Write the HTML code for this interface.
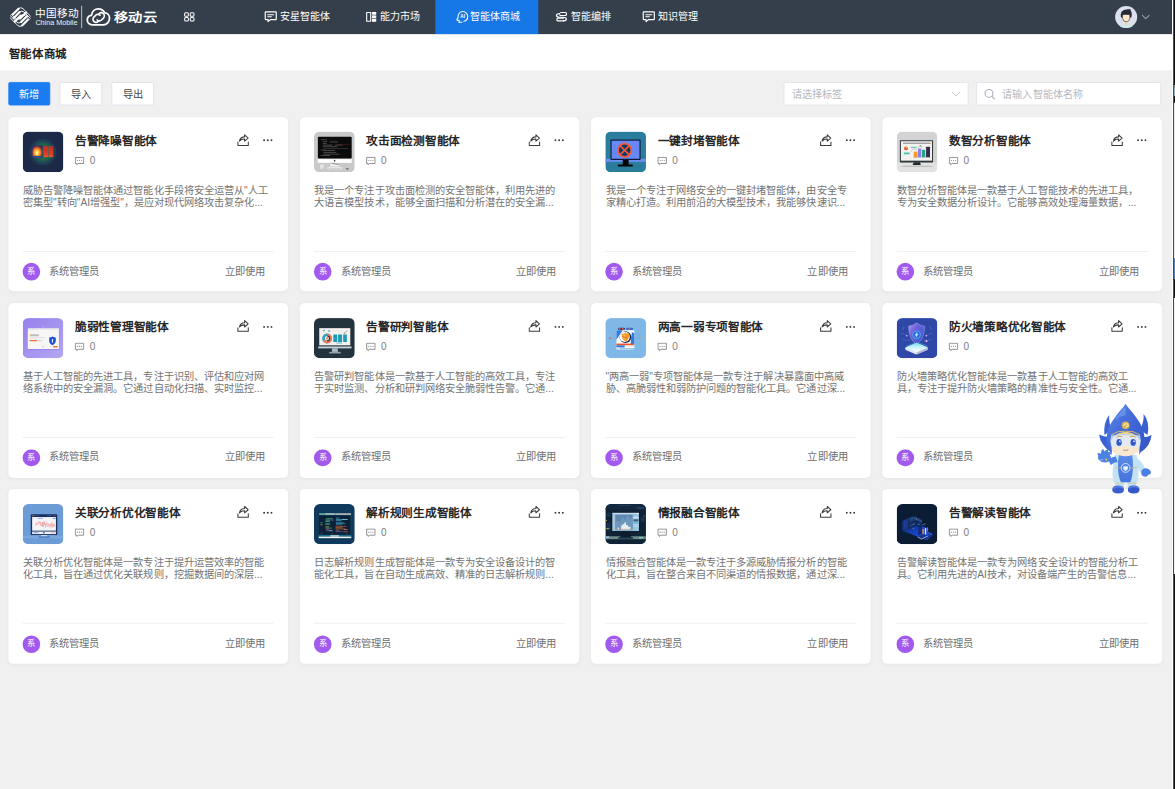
<!DOCTYPE html>
<html lang="zh-CN">
<head>
<meta charset="utf-8">
<title>智能体商城</title>
<style>
*{box-sizing:border-box;margin:0;padding:0}
html,body{width:1175px;height:789px;overflow:hidden;background:#f0f0f0;font-family:"Liberation Sans",sans-serif}
#edge{position:absolute;left:1172px;top:0;width:3px;height:789px;background:#fff}
#edge i{position:absolute;top:0;height:789px;width:1px}
#edge .r{left:1px;background:#d0101c}
#edge .k{left:2px;background:linear-gradient(to bottom,#101010 0,#101010 85px,#8a8f92 85px,#8a8f92 88px,#8fb7bd 88px,#8fb7bd 96px,#151515 96px,#151515 103px,#ececec 103px,#ececec 258px,#4a86c8 258px,#4a86c8 279px,#161616 279px,#161616 298px,#f2f2f2 298px,#f2f2f2 574px,#141414 574px,#141414 789px)}
#page{position:absolute;left:0;top:0;width:1400px;height:943px;transform:scale(0.83714);transform-origin:0 0;background:#f0f0f0;overflow:hidden;color:#333;font-size:12px}
#hdr{position:absolute;left:0;top:0;width:1400px;height:40.7px;background:#343f4b;color:#fff}
#hdr .abs{position:absolute}
.nav{position:absolute;top:0;height:40.7px;line-height:40.7px;font-size:12px;color:#fff;white-space:nowrap}
.nav svg{position:absolute;top:13px;left:0}
#tabact{position:absolute;left:519.6px;top:0;width:123.2px;height:40.7px;background:#1677e6}
#tbar{position:absolute;left:0;top:40.7px;width:1400px;height:43.1px;background:#fff}
#tbar b{position:absolute;left:10.2px;top:14.5px;font-size:13.7px;line-height:19px;color:#1f1f1f;font-weight:bold}
.btn{position:absolute;top:98px;height:28px;width:50.6px;border:1px solid #dcdfe6;background:#fff;border-radius:2px;font-size:12.2px;line-height:28.2px;text-align:center;color:#444}
.btn.pri{background:#1a7cf0;border-color:#1a7cf0;color:#fff}
.inp{position:absolute;top:98px;height:28px;border:1px solid #dfe2e8;background:#fff;border-radius:2px;font-size:12.1px;line-height:28.6px;color:#b4b8bf;white-space:nowrap}
#grid{position:absolute;left:9.8px;top:139.9px;display:grid;grid-template-columns:repeat(4,334.4px);grid-auto-rows:208.6px;column-gap:13.6px;row-gap:13.65px}
.card{position:relative;background:#fff;border-radius:6px;box-shadow:0 1px 5px rgba(0,0,0,.045)}
.ic{position:absolute;left:17.6px;top:17.4px;width:48.6px;height:48.6px;border-radius:7px;overflow:hidden}
.ic svg{display:block;width:100%;height:100%}
.tt{position:absolute;left:79.8px;top:18.8px;font-size:14px;line-height:19px;font-weight:bold;color:#262626;white-space:nowrap}
.sh{position:absolute;left:272.9px;top:19.9px;width:15px;height:15px}
.dt{position:absolute;left:303.8px;top:26.4px;width:12px;height:3px}
.cm{position:absolute;left:79.4px;top:47px;width:12px;height:11px}
.cn{position:absolute;left:97.3px;top:45px;font-size:12px;line-height:14px;color:#7d7d7d}
.ds{position:absolute;left:17.6px;top:80.9px;width:300px;font-size:12.2px;line-height:14px;color:#737373;white-space:nowrap;overflow:hidden}
.hr{position:absolute;left:17.6px;right:17.6px;top:159.8px;height:1px;background:#ededed}
.av{position:absolute;left:17.6px;top:174.5px;width:20.8px;height:20.8px;border-radius:50%;background:#a259ee;color:#fff;font-size:10px;line-height:20.8px;text-align:center}
.nm{position:absolute;left:49px;top:177.3px;font-size:12.3px;line-height:14px;color:#6e6e6e;white-space:nowrap}
.us{position:absolute;right:27.6px;top:177.3px;font-size:12.3px;line-height:14px;color:#6e6e6e;white-space:nowrap}
#mascot{position:absolute;left:1085px;top:395px;width:70px;height:105px}
</style>
</head>
<body>
<div id="page">
  <div id="hdr">
    <div id="tabact"></div>
    <svg class="abs" style="left:0;top:0" width="1400" height="40.3" viewBox="0 0 1400 40.3" fill="none" stroke="#fff" stroke-linecap="round" stroke-linejoin="round">
<!-- china mobile diamond -->
<g transform="translate(24.300 20.400) rotate(45) scale(1.120)">
<clipPath id="cmc"><rect x="-9.400" y="-9.400" width="18.800" height="18.800" rx="5"/></clipPath>
<g clip-path="url(#cmc)">
<path d="M-7.700 3.600V-5M-4.300 5.600V-3.200M-.900 7.800V-1.400M7.700 -3.600V5M4.300 -5.600V3.200M.900 -7.800V1.400" stroke-width="2.250"/>
<path d="M-7.700 -5Q-7.700 -8.300 -4.400 -8.300H9.500M-4.300 -3.200Q-4.300 -6.500 -1 -6.500H9.500M-.900 -1.400Q-.900 -4.700 2.400 -4.700H9.500M7.700 5Q7.700 8.300 4.400 8.300H-9.500M4.300 3.200Q4.300 6.500 1 6.500H-9.500M.900 1.400Q.900 4.700 -2.400 4.700H-9.500" stroke-width=".950"/>
</g>
</g>
<line x1="97.5" y1="7.4" x2="97.5" y2="33.2" stroke="#c9cdd2" stroke-width="1.1"/>
<!-- cloud -->
<g stroke-width="2.1">
<path d="M110.2 29.6c-3.6 0-6-2.4-6-5.6 0-3 2.2-5.3 5-5.6.5-4.6 4-7.8 8.3-7.8 3.4 0 6.2 1.9 7.5 4.8 3.4.2 5.800 2.900 5.800 6.400 0 4.200-3.200 7.800-7.400 7.800z"/>
<path d="M119.6 18.2c-1.400-1.500-3.800-1.500-5.200-.1l-2.300 2.300c-1.500 1.500-1.500 3.800 0 5.200 1.400 1.400 3.700 1.400 5.200 0l1.100-1.100" stroke-width="1.9"/>
<path d="M116 23.800c1.400 1.500 3.800 1.500 5.200.1l2.300-2.300c1.500-1.500 1.500-3.800 0-5.200-1.400-1.400-3.700-1.400-5.200 0l-1.100 1.100" stroke-width="1.900"/>
</g>
<!-- grid icon -->
<g stroke-width="1.25">
<rect x="220.500" y="15.200" width="4.500" height="4.200" rx="1.300"/><rect x="227.200" y="15.200" width="4.500" height="4.200" rx="1.300"/>
<rect x="220.500" y="21" width="4.500" height="4.200" rx="1.300"/><rect x="227.200" y="21" width="4.500" height="4.200" rx="1.300"/>
</g>
<!-- nav1 icon -->
<g stroke-width="1.400">
<path d="M317.600 14.200h11.600c.5 0 .8.300.8.800v7.600c0 .5-.3.800-.8.800h-6.300l-2.700 2.400v-2.400h-2.600c-.5 0-.8-.3-.8-.8V15c0-.5.300-.8.800-.8z"/>
<path d="M319.800 17.500h7.200M319.800 20.100h4.400" stroke-width="1.200"/>
</g>
<g stroke-width="1.400" transform="translate(451.600 0)">
<path d="M317.600 14.200h11.600c.5 0 .8.300.8.800v7.600c0 .5-.3.800-.8.800h-6.300l-2.700 2.400v-2.400h-2.600c-.5 0-.8-.3-.8-.8V15c0-.5.300-.8.800-.8z"/>
<path d="M319.800 17.500h7.200M319.800 20.100h4.400" stroke-width="1.200"/>
</g>
<!-- nav2 icon -->
<g stroke-width="1.300"><rect x="438" y="15" width="4.800" height="10.300"/></g>
<g fill="#fff" stroke="none"><rect x="444.400" y="14.300" width="5" height="3.300"/><rect x="444.400" y="18.400" width="5" height="3.500"/><rect x="444.400" y="22.700" width="5" height="3.300"/></g>
<!-- nav3 icon: head with AI -->
<g stroke-width="1.300">
<path d="M548.400 26.600v-2.300l-2.200-.2c-.4 0-.6-.3-.4-.7l1.300-2.600c-.3-4 2.300-7 5.800-7 3.300 0 5.800 2.700 5.800 5.800 0 2.900-2 5.200-4.700 5.700"/>
<path d="M548.400 26.600h3.400"/>
</g>
<text x="549.800" y="21.800" font-family="Liberation Sans, sans-serif" font-size="5.600" font-weight="bold" fill="#fff" stroke="none">AI</text>
<!-- nav4 icon -->
<g stroke-width="1.400">
<path d="M669.800 14.900h5.600c.7 0 1.200.5 1.200 1.200v1.200c0 .7-.5 1.200-1.200 1.200h-5.600c-.7 0-1.200-.5-1.200-1.200"/>
<path d="M668.600 16.100c-2.200 0-3.900 1-3.900 2.500s1.500 2 3.500 2h4.600c2.100 0 3.700.6 3.700 2.100 0 1.400-1.400 2.300-3.200 2.300"/>
<path d="M673.300 25h-6.800c-.7 0-1.200-.5-1.200-1.200v-.9c0-.7.500-1.200 1.200-1.200h6.800"/>
</g>
<!-- avatar -->
<g stroke="none">
<circle cx="1345.300" cy="20.300" r="13.200" fill="#dcdfec"/>
<clipPath id="avc"><circle cx="1345.300" cy="20.300" r="13.200"/></clipPath>
<g clip-path="url(#avc)">
<ellipse cx="1345.300" cy="33.200" rx="8.200" ry="4.600" fill="#c8ecf2"/>
<path d="M1343.600 24.600h3.400v6l-1.700 1.300-1.700-1.300z" fill="#f6d8a8"/>
<path d="M1339.200 21c-1.200-5.800 1-9.400 6.400-9.700 2.300-.1 4.200-.4 4.800-.8-.2 1.100-.1 1.400.1 1.800 1.600 1.700 2 5 1 8.700z" fill="#262b38"/>
<path d="M1341 17.400c2.800-.3 6-.3 8.600 0 .5 3.900-.2 6.300-1.600 7.600-1.300 1.300-4.100 1.300-5.400 0-1.400-1.300-2.100-3.700-1.600-7.600z" fill="#ffe6c8" stroke="#1d1d24" stroke-width=".700"/>
</g>
</g>
<path d="M1364.700 18.300l4 4 4-4" stroke="#98a1ab" stroke-width="1.200"/>
</svg>
<div class="abs" style="left:41.800px;top:8.800px;font-size:12.700px;line-height:15px;white-space:nowrap;color:#fff">中国移动</div>
<div class="abs" style="left:42.300px;top:21.800px;font-size:8.600px;line-height:10px;white-space:nowrap;color:#f2f2f2">China Mobile</div>
<div class="abs" style="left:135.900px;top:10.900px;font-size:14.600px;line-height:21px;font-weight:bold;transform:scaleX(1.165);transform-origin:0 0;white-space:nowrap;color:#fff">移动云</div>
<div class="nav" style="left:334.200px">安星智能体</div>
<div class="nav" style="left:454px">能力市场</div>
<div class="nav" style="left:561.600px">智能体商城</div>
<div class="nav" style="left:681.500px">智能编排</div>
<div class="nav" style="left:785.800px">知识管理</div>

  </div>
  <div id="tbar"><b>智能体商城</b></div>
  <div class="btn pri" style="left:9.8px">新增</div>
  <div class="btn" style="left:71px">导入</div>
  <div class="btn" style="left:133.2px">导出</div>
  <div class="inp" style="left:935.9px;width:221.2px;padding-left:9px">请选择标签</div>
  <div class="inp" style="left:1166.4px;width:221px;padding-left:30px">请输入智能体名称</div>
  <svg style="position:absolute;left:0;top:84px" width="1400" height="56" viewBox="0 84 1400 56" fill="none" stroke-linecap="round" stroke-linejoin="round">
<path d="M1137.800 110.400l4.300 4.200 4.300-4.200" stroke="#b9bdc4" stroke-width="1.100"/>
<circle cx="1181.400" cy="111.600" r="4.700" stroke="#a6abb3" stroke-width="1.200"/><path d="M1184.900 115.200l3 3.100" stroke="#a6abb3" stroke-width="1.200"/>
</svg>
  <div id="grid">
    <div class="card"><div class="ic"><svg viewBox="0 0 640 640" preserveAspectRatio="none"><defs><radialGradient id="g1a"><stop offset="0" stop-color="#2a7a50"/><stop offset=".55" stop-color="#22664e" stop-opacity=".95"/><stop offset=".8" stop-color="#1e4c5a" stop-opacity=".6"/><stop offset="1" stop-color="#1c2848" stop-opacity="0"/></radialGradient>
<radialGradient id="g1b" cx=".45" cy=".6" r=".62"><stop offset="0" stop-color="#fff3a0"/><stop offset=".28" stop-color="#ffc93a"/><stop offset=".52" stop-color="#f28a2a"/><stop offset=".75" stop-color="#d8402c" stop-opacity=".9"/><stop offset="1" stop-color="#8a2a4a" stop-opacity=".25"/></radialGradient>
<linearGradient id="g1c" x1="0" y1="0" x2="0" y2="1"><stop offset="0" stop-color="#c42f28"/><stop offset=".6" stop-color="#d93c2c"/><stop offset="1" stop-color="#e85c2e"/></linearGradient></defs><rect width="640" height="640" fill="#1c2848"/>
<circle cx="320" cy="325" r="235" fill="url(#g1a)"/>
<g fill="none" stroke="#3a9aa0" stroke-width="8" stroke-dasharray="7 24" opacity=".8"><circle cx="320" cy="325" r="205"/><circle cx="320" cy="325" r="245" stroke="#8a7a3a" stroke-dasharray="5 38"/></g>
<rect x="155" y="222" width="158" height="186" fill="#1b2f6a"/>
<rect x="155" y="222" width="158" height="186" fill="url(#g1b)"/>
<rect x="155" y="385" width="158" height="23" fill="#1f4f9a"/>
<rect x="218" y="315" width="22" height="52" fill="#fff6c8"/>
<rect x="330" y="232" width="72" height="172" fill="url(#g1c)"/><rect x="410" y="232" width="72" height="172" fill="url(#g1c)"/>
<g stroke="#b9281f" stroke-width="7" opacity=".55"><path d="M338 268h56M338 300h56M338 332h56M338 364h56M418 268h56M418 300h56M418 332h56M418 364h56"/></g></svg></div><div class="tt">告警降噪智能体</div><svg class="sh" viewBox="0 0 15 15" fill="none" stroke="#3a3a3a" stroke-width="1.25" stroke-linejoin="round" stroke-linecap="round"><path d="M1.2 9.6v4.2h12.4V9.6"/><path d="M3 8.6c.6-3.2 2.6-5 6.2-5.1V1l4.2 3.9-4.2 3.7V6.1C6.6 6 4.6 6.7 3 8.6z"/></svg><svg class="dt" viewBox="0 0 12 3"><circle cx="1.5" cy="1.5" r="1.15" fill="#3a3a3a"/><circle cx="5.9" cy="1.5" r="1.15" fill="#3a3a3a"/><circle cx="10.3" cy="1.5" r="1.15" fill="#3a3a3a"/></svg><svg class="cm" viewBox="0 0 12 11" fill="none" stroke="#868686" stroke-width="1.1" stroke-linejoin="round"><path d="M1 1h10v7.3H4.4L2.7 9.8V8.3H1z"/><g fill="#868686" stroke="none"><circle cx="3.5" cy="4.7" r=".7"/><circle cx="6" cy="4.7" r=".7"/><circle cx="8.5" cy="4.7" r=".7"/></g></svg><span class="cn">0</span><div class="ds">威胁告警降噪智能体通过智能化手段将安全运营从"人工<br>密集型"转向"AI增强型"，是应对现代网络攻击复杂化...</div><div class="hr"></div><div class="av">系</div><div class="nm">系统管理员</div><div class="us">立即使用</div></div>
    <div class="card"><div class="ic"><svg viewBox="0 0 640 640" preserveAspectRatio="none"><rect width="640" height="640" fill="#c9c9c9"/>
<rect x="62" y="82" width="532" height="342" rx="14" fill="#0b0b0b"/>
<g stroke="#8d8d8d" stroke-width="9" opacity=".8"><path d="M110 130h95M140 160h70M250 165h130M140 190h60M140 215h150M330 215h120M140 240h230"/><path d="M150 268h390" stroke="#5d5d5d"/><path d="M105 292h70M150 300h180M150 330h200M150 358h250M105 378h150"/></g>
<path d="M370 208h190" stroke="#a33" stroke-width="7" opacity=".7"/>
<rect x="60" y="436" width="534" height="58" fill="#fff"/>
<rect x="318" y="446" width="16" height="30" rx="6" fill="#333"/>
<path d="M270 498l120 18 10 34H250z" fill="#f0f0f0"/><path d="M275 500l115 22" stroke="#444" stroke-width="8"/>
<rect x="215" y="560" width="225" height="34" rx="6" fill="#ededed"/><rect x="230" y="572" width="195" height="12" fill="#bdbdbd"/>
<path d="M100 520h55v40l-20 28h-35z" fill="#e6e6e6"/><path d="M495 575l60 8-30 22z" fill="#666"/></svg></div><div class="tt">攻击面检测智能体</div><svg class="sh" viewBox="0 0 15 15" fill="none" stroke="#3a3a3a" stroke-width="1.25" stroke-linejoin="round" stroke-linecap="round"><path d="M1.2 9.6v4.2h12.4V9.6"/><path d="M3 8.6c.6-3.2 2.6-5 6.2-5.1V1l4.2 3.9-4.2 3.7V6.1C6.6 6 4.6 6.7 3 8.6z"/></svg><svg class="dt" viewBox="0 0 12 3"><circle cx="1.5" cy="1.5" r="1.15" fill="#3a3a3a"/><circle cx="5.9" cy="1.5" r="1.15" fill="#3a3a3a"/><circle cx="10.3" cy="1.5" r="1.15" fill="#3a3a3a"/></svg><svg class="cm" viewBox="0 0 12 11" fill="none" stroke="#868686" stroke-width="1.1" stroke-linejoin="round"><path d="M1 1h10v7.3H4.4L2.7 9.8V8.3H1z"/><g fill="#868686" stroke="none"><circle cx="3.5" cy="4.7" r=".7"/><circle cx="6" cy="4.7" r=".7"/><circle cx="8.5" cy="4.7" r=".7"/></g></svg><span class="cn">0</span><div class="ds">我是一个专注于攻击面检测的安全智能体，利用先进的<br>大语言模型技术，能够全面扫描和分析潜在的安全漏...</div><div class="hr"></div><div class="av">系</div><div class="nm">系统管理员</div><div class="us">立即使用</div></div>
    <div class="card"><div class="ic"><svg viewBox="0 0 640 640" preserveAspectRatio="none"><rect width="640" height="640" fill="#2a7d9c"/>
<rect y="430" width="640" height="48" fill="#6e8df3"/>
<rect x="82" y="128" width="474" height="320" rx="10" fill="#0f1c3e"/>
<rect x="100" y="146" width="438" height="284" fill="#6889f5"/>
<path d="M150 230l-12 60 12 60M490 230l12 60-12 60" stroke="#557be0" stroke-width="7" fill="none"/>
<circle cx="305" cy="295" r="104" fill="#0c3a62" stroke="#f5573a" stroke-width="28"/>
<path d="M232 222l146 146M378 222L232 368" stroke="#f5573a" stroke-width="26"/>
<rect x="275" y="446" width="92" height="80" fill="#030303"/>
<rect x="198" y="522" width="236" height="30" rx="6" fill="#050505"/>
<path d="M60 548h120M450 548h130" stroke="#256f8c" stroke-width="6"/></svg></div><div class="tt">一键封堵智能体</div><svg class="sh" viewBox="0 0 15 15" fill="none" stroke="#3a3a3a" stroke-width="1.25" stroke-linejoin="round" stroke-linecap="round"><path d="M1.2 9.6v4.2h12.4V9.6"/><path d="M3 8.6c.6-3.2 2.6-5 6.2-5.1V1l4.2 3.9-4.2 3.7V6.1C6.6 6 4.6 6.7 3 8.6z"/></svg><svg class="dt" viewBox="0 0 12 3"><circle cx="1.5" cy="1.5" r="1.15" fill="#3a3a3a"/><circle cx="5.9" cy="1.5" r="1.15" fill="#3a3a3a"/><circle cx="10.3" cy="1.5" r="1.15" fill="#3a3a3a"/></svg><svg class="cm" viewBox="0 0 12 11" fill="none" stroke="#868686" stroke-width="1.1" stroke-linejoin="round"><path d="M1 1h10v7.3H4.4L2.7 9.8V8.3H1z"/><g fill="#868686" stroke="none"><circle cx="3.5" cy="4.7" r=".7"/><circle cx="6" cy="4.7" r=".7"/><circle cx="8.5" cy="4.7" r=".7"/></g></svg><span class="cn">0</span><div class="ds">我是一个专注于网络安全的一键封堵智能体，由安全专<br>家精心打造。利用前沿的大模型技术，我能够快速识...</div><div class="hr"></div><div class="av">系</div><div class="nm">系统管理员</div><div class="us">立即使用</div></div>
    <div class="card"><div class="ic"><svg viewBox="0 0 640 640" preserveAspectRatio="none"><rect width="640" height="640" fill="#d3d3d5"/>
<rect y="488" width="640" height="152" fill="#e2e2e3"/>
<ellipse cx="318" cy="548" rx="262" ry="9" fill="#9c9c9c" opacity=".7"/>
<path d="M268 484h100l14 46H254z" fill="#1d2a2b"/>
<rect x="52" y="138" width="522" height="350" rx="10" fill="#2c3739"/>
<rect x="68" y="154" width="490" height="306" fill="#f3f2ef"/>
<rect x="100" y="180" width="430" height="10" rx="5" fill="#5a5560"/><circle cx="538" cy="185" r="9" fill="#f0a83a"/>
<circle cx="148" cy="268" r="30" fill="#e8553b"/><path d="M148 268v-30a30 30 0 0 1 28 20z" fill="#f3b24a"/>
<rect x="226" y="242" width="88" height="15" fill="#3fbfae"/>
<rect x="114" y="332" width="92" height="28" fill="#43c4b4"/>
<path d="M228 318l40-48 36 18 60-62 40 22" stroke="#8a8a8a" stroke-width="6" fill="none"/><circle cx="372" cy="226" r="9" fill="#3a3a3a"/><circle cx="392" cy="246" r="8" fill="#f0a83a"/>
<rect x="270" y="318" width="60" height="90" fill="#f5982b"/>
<rect x="337" y="268" width="52" height="140" rx="8" fill="#8d7ee9"/>
<rect x="400" y="288" width="52" height="120" rx="6" fill="#1fa68d"/>
<rect x="464" y="240" width="62" height="168" rx="10" fill="#3a2a4e"/>
<path d="M262 410h280" stroke="#8d8d8d" stroke-width="5"/></svg></div><div class="tt">数智分析智能体</div><svg class="sh" viewBox="0 0 15 15" fill="none" stroke="#3a3a3a" stroke-width="1.25" stroke-linejoin="round" stroke-linecap="round"><path d="M1.2 9.6v4.2h12.4V9.6"/><path d="M3 8.6c.6-3.2 2.6-5 6.2-5.1V1l4.2 3.9-4.2 3.7V6.1C6.6 6 4.6 6.7 3 8.6z"/></svg><svg class="dt" viewBox="0 0 12 3"><circle cx="1.5" cy="1.5" r="1.15" fill="#3a3a3a"/><circle cx="5.9" cy="1.5" r="1.15" fill="#3a3a3a"/><circle cx="10.3" cy="1.5" r="1.15" fill="#3a3a3a"/></svg><svg class="cm" viewBox="0 0 12 11" fill="none" stroke="#868686" stroke-width="1.1" stroke-linejoin="round"><path d="M1 1h10v7.3H4.4L2.7 9.8V8.3H1z"/><g fill="#868686" stroke="none"><circle cx="3.5" cy="4.7" r=".7"/><circle cx="6" cy="4.7" r=".7"/><circle cx="8.5" cy="4.7" r=".7"/></g></svg><span class="cn">0</span><div class="ds">数智分析智能体是一款基于人工智能技术的先进工具，<br>专为安全数据分析设计。它能够高效处理海量数据，...</div><div class="hr"></div><div class="av">系</div><div class="nm">系统管理员</div><div class="us">立即使用</div></div>
    <div class="card"><div class="ic"><svg viewBox="0 0 640 640" preserveAspectRatio="none"><defs><linearGradient id="g5a" x1="0" y1="0" x2="1" y2="1"><stop offset="0" stop-color="#9680ec"/><stop offset="1" stop-color="#b4a6f3"/></linearGradient></defs><rect width="640" height="640" fill="url(#g5a)"/>
<rect x="90" y="178" width="490" height="322" rx="8" fill="#7f68d8" opacity=".35"/>
<rect x="82" y="162" width="490" height="322" rx="8" fill="#f7f6f4"/>
<rect x="82" y="162" width="490" height="26" rx="8" fill="#ecebea"/>
<circle cx="106" cy="176" r="6" fill="#f0c24a"/><circle cx="150" cy="176" r="6" fill="#5b8def"/>
<rect x="118" y="255" width="138" height="30" fill="#8a8a8a" opacity=".55"/><rect x="118" y="255" width="10" height="30" fill="#f2c14e"/>
<rect x="112" y="306" width="240" height="8" fill="#c8c8c8"/>
<rect x="110" y="346" width="118" height="18" rx="4" fill="#f2703a"/><rect x="228" y="346" width="80" height="18" rx="4" fill="#dcdcdc"/>
<path d="M470 290c-20 14-40 16-52 16v52c0 36 26 56 52 70 26-14 52-34 52-70v-52c-12 0-32-2-52-16z" fill="#1d4fd7"/>
<circle cx="470" cy="340" r="13" fill="#fff"/><path d="M464 344h12l4 40h-20z" fill="#fff"/>
<rect x="476" y="440" width="78" height="24" rx="12" fill="#f2703a"/>
<rect x="310" y="446" width="22" height="10" fill="#9a9a9a"/><rect x="430" y="446" width="14" height="10" fill="#c5c5c5"/>
<rect x="322" y="128" width="8" height="34" fill="#cfc6f7"/></svg></div><div class="tt">脆弱性管理智能体</div><svg class="sh" viewBox="0 0 15 15" fill="none" stroke="#3a3a3a" stroke-width="1.25" stroke-linejoin="round" stroke-linecap="round"><path d="M1.2 9.6v4.2h12.4V9.6"/><path d="M3 8.6c.6-3.2 2.6-5 6.2-5.1V1l4.2 3.9-4.2 3.7V6.1C6.6 6 4.6 6.7 3 8.6z"/></svg><svg class="dt" viewBox="0 0 12 3"><circle cx="1.5" cy="1.5" r="1.15" fill="#3a3a3a"/><circle cx="5.9" cy="1.5" r="1.15" fill="#3a3a3a"/><circle cx="10.3" cy="1.5" r="1.15" fill="#3a3a3a"/></svg><svg class="cm" viewBox="0 0 12 11" fill="none" stroke="#868686" stroke-width="1.1" stroke-linejoin="round"><path d="M1 1h10v7.3H4.4L2.7 9.8V8.3H1z"/><g fill="#868686" stroke="none"><circle cx="3.5" cy="4.7" r=".7"/><circle cx="6" cy="4.7" r=".7"/><circle cx="8.5" cy="4.7" r=".7"/></g></svg><span class="cn">0</span><div class="ds">基于人工智能的先进工具，专注于识别、评估和应对网<br>络系统中的安全漏洞。它通过自动化扫描、实时监控...</div><div class="hr"></div><div class="av">系</div><div class="nm">系统管理员</div><div class="us">立即使用</div></div>
    <div class="card"><div class="ic"><svg viewBox="0 0 640 640" preserveAspectRatio="none"><rect width="640" height="640" fill="#22333d"/>
<rect x="84" y="158" width="488" height="270" fill="#f4f1ef"/>
<circle cx="208" cy="320" r="58" fill="none" stroke="#2ea6c0" stroke-width="42"/>
<path d="M208 262a58 58 0 1 1-50 88" fill="none" stroke="#f07a62" stroke-width="42"/>
<path d="M208 282a38 38 0 0 1 0 76" fill="none" stroke="#2a2e36" stroke-width="18"/>
<circle cx="208" cy="320" r="18" fill="#f07a62"/>
<rect x="305" y="258" width="62" height="118" fill="#1b9bb6"/><rect x="380" y="258" width="62" height="118" fill="#1b9bb6"/><rect x="460" y="258" width="58" height="118" fill="#1b9bb6"/>
<path d="M305 318h213" stroke="#48b7cc" stroke-width="6"/>
<rect x="355" y="386" width="90" height="12" fill="#36aac4"/>
<circle cx="150" cy="200" r="12" fill="#f07a62"/><circle cx="165" cy="190" r="10" fill="#2ea6c0"/><path d="M215 212l22-30 24 30z" fill="#2ea6c0"/><rect x="285" y="198" width="160" height="6" fill="#f5cfc5"/>
<circle cx="478" cy="236" r="9" fill="#f07a62"/><circle cx="500" cy="250" r="8" fill="#f0a24a"/><path d="M470 250l58-62" stroke="#2c6e8a" stroke-width="7"/>
<rect x="68" y="446" width="524" height="30" fill="#c8d3da"/>
<rect x="284" y="476" width="92" height="56" fill="#aeb9c0"/><rect x="240" y="530" width="182" height="26" fill="#97a3ab"/></svg></div><div class="tt">告警研判智能体</div><svg class="sh" viewBox="0 0 15 15" fill="none" stroke="#3a3a3a" stroke-width="1.25" stroke-linejoin="round" stroke-linecap="round"><path d="M1.2 9.6v4.2h12.4V9.6"/><path d="M3 8.6c.6-3.2 2.6-5 6.2-5.1V1l4.2 3.9-4.2 3.7V6.1C6.6 6 4.6 6.7 3 8.6z"/></svg><svg class="dt" viewBox="0 0 12 3"><circle cx="1.5" cy="1.5" r="1.15" fill="#3a3a3a"/><circle cx="5.9" cy="1.5" r="1.15" fill="#3a3a3a"/><circle cx="10.3" cy="1.5" r="1.15" fill="#3a3a3a"/></svg><svg class="cm" viewBox="0 0 12 11" fill="none" stroke="#868686" stroke-width="1.1" stroke-linejoin="round"><path d="M1 1h10v7.3H4.4L2.7 9.8V8.3H1z"/><g fill="#868686" stroke="none"><circle cx="3.5" cy="4.7" r=".7"/><circle cx="6" cy="4.7" r=".7"/><circle cx="8.5" cy="4.7" r=".7"/></g></svg><span class="cn">0</span><div class="ds">告警研判智能体是一款基于人工智能的高效工具，专注<br>于实时监测、分析和研判网络安全脆弱性告警。它通...</div><div class="hr"></div><div class="av">系</div><div class="nm">系统管理员</div><div class="us">立即使用</div></div>
    <div class="card"><div class="ic"><svg viewBox="0 0 640 640" preserveAspectRatio="none"><rect width="640" height="640" fill="#7fb7e6"/>
<g stroke="#6aa0d2" stroke-width="5" fill="none"><path d="M70 318h110M100 270h70M460 318h110M470 250h60v68"/></g>
<rect x="60" y="305" width="26" height="26" fill="#f0603a"/><rect x="555" y="308" width="20" height="20" fill="#e89a3a"/><rect x="95" y="262" width="18" height="18" fill="#f2a58a"/>
<rect x="205" y="150" width="100" height="38" rx="10" fill="#1f3a78"/><rect x="212" y="156" width="26" height="26" fill="#f0603a"/><rect x="262" y="156" width="26" height="26" fill="#f0603a"/>
<rect x="330" y="150" width="105" height="38" rx="10" fill="#2b6fd6"/><rect x="366" y="152" width="26" height="30" fill="#f0603a"/>
<rect x="176" y="192" width="282" height="300" rx="18" fill="#ffffff"/>
<path d="M176 210q0-18 18-18h80l-98 150z" fill="#2f7be0"/>
<path d="M458 240v170l-60 10 20-200z" fill="#2f7be0"/>
<circle cx="318" cy="300" r="92" fill="#13265a"/>
<circle cx="306" cy="296" r="80" fill="#fff"/>
<path d="M318 226c-22 16-46 20-62 20 2 62 18 100 62 124 44-24 60-62 62-124-16 0-40-4-62-20z" fill="#f59a23"/>
<path d="M318 246c-14 10-30 14-42 14 2 44 14 72 42 90z" fill="#f7b44a"/>
<path d="M262 286l50 14-8 10 46-4" stroke="#c65a1a" stroke-width="8" fill="none"/>
<rect x="176" y="400" width="276" height="28" fill="#f0532c"/>
<rect x="176" y="428" width="130" height="34" fill="#2f7be0"/><rect x="320" y="434" width="132" height="24" fill="#e9eef6"/>
<rect x="176" y="462" width="50" height="30" fill="#cfe0f3"/><rect x="226" y="470" width="226" height="20" fill="#9cc3ea"/>
<rect x="140" y="448" width="18" height="8" fill="#d8a04a"/></svg></div><div class="tt">两高一弱专项智能体</div><svg class="sh" viewBox="0 0 15 15" fill="none" stroke="#3a3a3a" stroke-width="1.25" stroke-linejoin="round" stroke-linecap="round"><path d="M1.2 9.6v4.2h12.4V9.6"/><path d="M3 8.6c.6-3.2 2.6-5 6.2-5.1V1l4.2 3.9-4.2 3.7V6.1C6.6 6 4.6 6.7 3 8.6z"/></svg><svg class="dt" viewBox="0 0 12 3"><circle cx="1.5" cy="1.5" r="1.15" fill="#3a3a3a"/><circle cx="5.9" cy="1.5" r="1.15" fill="#3a3a3a"/><circle cx="10.3" cy="1.5" r="1.15" fill="#3a3a3a"/></svg><svg class="cm" viewBox="0 0 12 11" fill="none" stroke="#868686" stroke-width="1.1" stroke-linejoin="round"><path d="M1 1h10v7.3H4.4L2.7 9.8V8.3H1z"/><g fill="#868686" stroke="none"><circle cx="3.5" cy="4.7" r=".7"/><circle cx="6" cy="4.7" r=".7"/><circle cx="8.5" cy="4.7" r=".7"/></g></svg><span class="cn">0</span><div class="ds">"两高一弱"专项智能体是一款专注于解决暴露面中高威<br>胁、高脆弱性和弱防护问题的智能化工具。它通过深...</div><div class="hr"></div><div class="av">系</div><div class="nm">系统管理员</div><div class="us">立即使用</div></div>
    <div class="card"><div class="ic"><svg viewBox="0 0 640 640" preserveAspectRatio="none"><defs><linearGradient id="g8a" x1="0" y1="0" x2="1" y2="1"><stop offset="0" stop-color="#b79af0"/><stop offset=".35" stop-color="#6a62dc"/><stop offset="1" stop-color="#2d55c8"/></linearGradient>
<linearGradient id="g8b" x1="0" y1="0" x2="0" y2="1"><stop offset="0" stop-color="#5fe0f0"/><stop offset=".45" stop-color="#c8f2fa"/><stop offset="1" stop-color="#ffffff"/></linearGradient></defs><rect width="640" height="640" fill="#2f47a7"/>
<g fill="none" stroke="#7aa7ff" stroke-width="9" opacity=".45"><path d="M60 250q60-30 110 40M80 330q80 40 150 10M580 250q-60-30-110 40M560 330q-80 40-150 10"/><path d="M120 140l-30 50M520 130l40 60" stroke="#9ad0ff"/></g>
<path d="M150 440l170-60 170 60" stroke="#5cd6f2" stroke-width="8" fill="none" opacity=".75"/>
<path d="M315 72c-40 34-84 50-124 54 0 130 30 224 124 286 94-62 124-156 124-286-40-4-84-20-124-54z" fill="url(#g8a)" stroke="#c8d4ff" stroke-width="7" stroke-opacity=".8"/>
<circle cx="315" cy="262" r="62" fill="#2a6be0" stroke="#7fd0ff" stroke-width="8"/><path d="M315 218l28 50h-20l-8 38-28-52h20z" fill="#bfe8ff"/>
<circle cx="160" cy="278" r="13" fill="#f5c3ee"/><circle cx="468" cy="278" r="12" fill="#f5d6f5"/><circle cx="470" cy="362" r="17" fill="#f2b6ec"/><circle cx="215" cy="235" r="8" fill="#e05a8a"/>
<path d="M140 462l175-76 175 76v34l-175 76-175-76z" fill="#cfd8ea"/>
<path d="M140 462l175 76v34l-175-76z" fill="#dfe6f2"/><path d="M490 462l-175 76v34l175-76z" fill="#aeb9d6"/>
<path d="M140 462l175-76 175 76-175 76z" fill="url(#g8b)"/>
<path d="M500 520q30 6 18 18" stroke="#2a3a8a" stroke-width="6" fill="none"/></svg></div><div class="tt">防火墙策略优化智能体</div><svg class="sh" viewBox="0 0 15 15" fill="none" stroke="#3a3a3a" stroke-width="1.25" stroke-linejoin="round" stroke-linecap="round"><path d="M1.2 9.6v4.2h12.4V9.6"/><path d="M3 8.6c.6-3.2 2.6-5 6.2-5.1V1l4.2 3.9-4.2 3.7V6.1C6.6 6 4.6 6.7 3 8.6z"/></svg><svg class="dt" viewBox="0 0 12 3"><circle cx="1.5" cy="1.5" r="1.15" fill="#3a3a3a"/><circle cx="5.9" cy="1.5" r="1.15" fill="#3a3a3a"/><circle cx="10.3" cy="1.5" r="1.15" fill="#3a3a3a"/></svg><svg class="cm" viewBox="0 0 12 11" fill="none" stroke="#868686" stroke-width="1.1" stroke-linejoin="round"><path d="M1 1h10v7.3H4.4L2.7 9.8V8.3H1z"/><g fill="#868686" stroke="none"><circle cx="3.5" cy="4.7" r=".7"/><circle cx="6" cy="4.7" r=".7"/><circle cx="8.5" cy="4.7" r=".7"/></g></svg><span class="cn">0</span><div class="ds">防火墙策略优化智能体是一款基于人工智能的高效工<br>具，专注于提升防火墙策略的精准性与安全性。它通...</div><div class="hr"></div><div class="av">系</div><div class="nm">系统管理员</div><div class="us" style="opacity:0">立即使用</div></div>
    <div class="card"><div class="ic"><svg viewBox="0 0 640 640" preserveAspectRatio="none"><rect width="640" height="640" fill="#6b9cd5"/>
<rect y="500" width="640" height="44" fill="#7aa8dc"/>
<rect x="128" y="160" width="418" height="330" rx="14" fill="#17305f"/>
<rect x="150" y="182" width="26" height="10" fill="#e8a04a"/><rect x="184" y="182" width="22" height="10" fill="#e04a4a"/><rect x="228" y="182" width="24" height="10" fill="#3f6fd0"/><rect x="385" y="182" width="70" height="10" fill="#3f6fd0"/><rect x="486" y="182" width="30" height="10" fill="#c8506a"/>
<rect x="150" y="206" width="374" height="214" fill="#f2f4f8"/>
<rect x="240" y="222" width="80" height="12" fill="#7fa0e0"/><rect x="478" y="220" width="40" height="14" fill="#5f86d8"/>
<g stroke="#f07a72" stroke-width="9" fill="none"><path d="M212 340v-40M226 330v-36M246 312v-28M262 300v-24M278 340v-58M296 352v-46M314 362v-78M330 360v-84M346 330v-46M362 372v-64M380 340v-40M398 360v-40M414 340v-28M432 372v-60M450 352v-52M466 372v-66M484 362v-44M500 352v-28"/></g>
<path d="M205 330q40-60 80-40t60-10 60 40 50-10 50 40" stroke="#f5a8a2" stroke-width="6" fill="none"/>
<rect x="150" y="434" width="374" height="40" fill="#eef1f6"/><rect x="172" y="444" width="80" height="16" fill="#86a8e6"/><rect x="322" y="442" width="24" height="20" fill="#3a4a6a"/><rect x="446" y="444" width="60" height="16" fill="#f5b8a8"/>
<path d="M296 490h88l12 26H284z" fill="#c7d6ec"/><rect x="250" y="512" width="178" height="14" rx="7" fill="#2e5db0"/></svg></div><div class="tt">关联分析优化智能体</div><svg class="sh" viewBox="0 0 15 15" fill="none" stroke="#3a3a3a" stroke-width="1.25" stroke-linejoin="round" stroke-linecap="round"><path d="M1.2 9.6v4.2h12.4V9.6"/><path d="M3 8.6c.6-3.2 2.6-5 6.2-5.1V1l4.2 3.9-4.2 3.7V6.1C6.6 6 4.6 6.7 3 8.6z"/></svg><svg class="dt" viewBox="0 0 12 3"><circle cx="1.5" cy="1.5" r="1.15" fill="#3a3a3a"/><circle cx="5.9" cy="1.5" r="1.15" fill="#3a3a3a"/><circle cx="10.3" cy="1.5" r="1.15" fill="#3a3a3a"/></svg><svg class="cm" viewBox="0 0 12 11" fill="none" stroke="#868686" stroke-width="1.1" stroke-linejoin="round"><path d="M1 1h10v7.3H4.4L2.7 9.8V8.3H1z"/><g fill="#868686" stroke="none"><circle cx="3.5" cy="4.7" r=".7"/><circle cx="6" cy="4.7" r=".7"/><circle cx="8.5" cy="4.7" r=".7"/></g></svg><span class="cn">0</span><div class="ds">关联分析优化智能体是一款专注于提升运营效率的智能<br>化工具，旨在通过优化关联规则，挖掘数据间的深层...</div><div class="hr"></div><div class="av">系</div><div class="nm">系统管理员</div><div class="us">立即使用</div></div>
    <div class="card"><div class="ic"><svg viewBox="0 0 640 640" preserveAspectRatio="none"><rect width="640" height="640" fill="#0f3a5d"/>
<rect x="78" y="144" width="508" height="336" fill="#0b2137"/>
<rect x="82" y="146" width="246" height="26" fill="#6fb5a0"/><rect x="180" y="146" width="150" height="26" fill="#9db8b8"/><rect x="334" y="146" width="250" height="26" fill="#b6c4c6"/>
<rect x="78" y="178" width="508" height="10" fill="#12405f"/>
<rect x="578" y="178" width="10" height="300" fill="#145a74"/>
<g stroke-width="10" fill="none">
<path d="M190 232h110" stroke="#4cd08a"/><path d="M180 254h80" stroke="#7be0a0"/><path d="M270 254h40" stroke="#b06ad8"/><path d="M180 276h70" stroke="#5ac8c8"/>
<path d="M100 296h40" stroke="#35b89a"/><path d="M100 328h36" stroke="#d8a03a"/>
<path d="M178 308h80M178 324h70" stroke="#3fae8e"/>
<path d="M180 360h60" stroke="#d8c23a"/><path d="M180 380h100" stroke="#4cd08a"/><path d="M190 400h50" stroke="#d0504a"/><path d="M190 420h100" stroke="#7a6ad8"/><path d="M236 420h60" stroke="#5ac8c8"/>
<path d="M345 222h60M345 244h180M345 262h90" stroke="#4fb6d8"/><path d="M440 244h90" stroke="#9ad8ea"/>
<path d="M345 290h120M345 308h150M345 326h100" stroke="#3f9ec0"/>
<path d="M340 352h170M340 372h110M340 392h150M340 412h60" stroke="#e0682a"/><path d="M470 402h60" stroke="#f09a3a"/>
<path d="M340 436h110" stroke="#7a6ad8"/><path d="M460 436h70" stroke="#e0682a"/>
<path d="M100 460h40M270 460h30M505 460h30" stroke="#b03a4a" stroke-width="7"/>
</g>
<rect x="74" y="488" width="514" height="26" fill="#1a6f8a"/><rect x="258" y="492" width="136" height="22" fill="#c9d3d3"/>
<rect x="74" y="514" width="514" height="24" fill="#f4f6f6"/></svg></div><div class="tt">解析规则生成智能体</div><svg class="sh" viewBox="0 0 15 15" fill="none" stroke="#3a3a3a" stroke-width="1.25" stroke-linejoin="round" stroke-linecap="round"><path d="M1.2 9.6v4.2h12.4V9.6"/><path d="M3 8.6c.6-3.2 2.6-5 6.2-5.1V1l4.2 3.9-4.2 3.7V6.1C6.6 6 4.6 6.7 3 8.6z"/></svg><svg class="dt" viewBox="0 0 12 3"><circle cx="1.5" cy="1.5" r="1.15" fill="#3a3a3a"/><circle cx="5.9" cy="1.5" r="1.15" fill="#3a3a3a"/><circle cx="10.3" cy="1.5" r="1.15" fill="#3a3a3a"/></svg><svg class="cm" viewBox="0 0 12 11" fill="none" stroke="#868686" stroke-width="1.1" stroke-linejoin="round"><path d="M1 1h10v7.3H4.4L2.7 9.8V8.3H1z"/><g fill="#868686" stroke="none"><circle cx="3.5" cy="4.7" r=".7"/><circle cx="6" cy="4.7" r=".7"/><circle cx="8.5" cy="4.7" r=".7"/></g></svg><span class="cn">0</span><div class="ds">日志解析规则生成智能体是一款专为安全设备设计的智<br>能化工具，旨在自动生成高效、精准的日志解析规则...</div><div class="hr"></div><div class="av">系</div><div class="nm">系统管理员</div><div class="us">立即使用</div></div>
    <div class="card"><div class="ic"><svg viewBox="0 0 640 640" preserveAspectRatio="none"><rect width="640" height="640" fill="#0f2236"/>
<rect x="0" y="0" width="640" height="90" fill="#13293f"/><rect x="210" y="18" width="180" height="14" fill="#1e3f60"/><rect x="500" y="50" width="110" height="30" fill="#22405c"/>
<g fill="#1a3550"><rect x="20" y="140" width="70" height="60"/><rect x="20" y="300" width="60" height="120"/><rect x="560" y="200" width="60" height="80"/></g>
<g fill="#c9c23a"><path d="M10 250l22 12-22 12zM20 380l60 8-60 8z"/><rect x="600" y="186" width="30" height="6"/></g>
<rect y="508" width="640" height="46" fill="#6f8a84"/><rect y="508" width="60" height="30" fill="#8fb6d8"/><rect x="530" y="518" width="60" height="26" fill="#7fc8b8"/>
<path d="M268 440h104l40 94H226z" fill="#0d1c2e"/><path d="M214 520h214l16 28H198z" fill="#15304a"/>
<rect x="98" y="126" width="444" height="312" rx="8" fill="#0a1828"/>
<rect x="112" y="140" width="418" height="286" fill="#86b2d4"/>
<rect x="112" y="140" width="418" height="22" fill="#c8dcec"/><rect x="500" y="144" width="24" height="14" fill="#fff"/>
<rect x="116" y="168" width="34" height="252" fill="#a8cbe6"/><rect x="120" y="210" width="26" height="18" fill="#d8c85a"/><rect x="120" y="270" width="26" height="14" fill="#d8c85a"/>
<rect x="160" y="170" width="268" height="230" fill="#5f88b0"/>
<path d="M160 400v-120l40-20 30 40 40-100 40 60 40-90 40 70 38-40v200z" fill="#7098bd"/>
<path d="M250 400v-60h20v-20h30v-30h26v40h30v30h40v40z" fill="#e8f0f6"/><rect x="196" y="372" width="20" height="28" fill="#f0f4f8"/>
<rect x="160" y="392" width="268" height="8" fill="#e0a860"/>
<rect x="438" y="170" width="88" height="250" fill="#9fc6e2"/><rect x="444" y="210" width="76" height="16" fill="#dfeefa"/><rect x="444" y="240" width="76" height="36" fill="#3d6288"/><rect x="444" y="292" width="76" height="16" fill="#48b0d0"/><rect x="444" y="320" width="76" height="12" fill="#c8dcec"/><rect x="444" y="346" width="76" height="12" fill="#c8dcec"/><rect x="444" y="372" width="76" height="12" fill="#6fd0c0"/>
<circle cx="420" cy="226" r="7" fill="#35c8d8"/><circle cx="330" cy="250" r="5" fill="#35c8d8"/></svg></div><div class="tt">情报融合智能体</div><svg class="sh" viewBox="0 0 15 15" fill="none" stroke="#3a3a3a" stroke-width="1.25" stroke-linejoin="round" stroke-linecap="round"><path d="M1.2 9.6v4.2h12.4V9.6"/><path d="M3 8.6c.6-3.2 2.6-5 6.2-5.1V1l4.2 3.9-4.2 3.7V6.1C6.6 6 4.6 6.7 3 8.6z"/></svg><svg class="dt" viewBox="0 0 12 3"><circle cx="1.5" cy="1.5" r="1.15" fill="#3a3a3a"/><circle cx="5.9" cy="1.5" r="1.15" fill="#3a3a3a"/><circle cx="10.3" cy="1.5" r="1.15" fill="#3a3a3a"/></svg><svg class="cm" viewBox="0 0 12 11" fill="none" stroke="#868686" stroke-width="1.1" stroke-linejoin="round"><path d="M1 1h10v7.3H4.4L2.7 9.8V8.3H1z"/><g fill="#868686" stroke="none"><circle cx="3.5" cy="4.7" r=".7"/><circle cx="6" cy="4.7" r=".7"/><circle cx="8.5" cy="4.7" r=".7"/></g></svg><span class="cn">0</span><div class="ds">情报融合智能体是一款专注于多源威胁情报分析的智能<br>化工具，旨在整合来自不同渠道的情报数据，通过深...</div><div class="hr"></div><div class="av">系</div><div class="nm">系统管理员</div><div class="us">立即使用</div></div>
    <div class="card"><div class="ic"><svg viewBox="0 0 640 640" preserveAspectRatio="none"><defs><linearGradient id="g12a" x1="0" y1="0" x2="1" y2="1"><stop offset="0" stop-color="#0f2878"/><stop offset=".55" stop-color="#1846c8"/><stop offset="1" stop-color="#2f6af0"/></linearGradient></defs><rect width="640" height="640" fill="#0b1d34"/>
<g fill="#2a3f60"><circle cx="170" cy="130" r="3"/><circle cx="520" cy="330" r="3"/><circle cx="440" cy="230" r="3"/><circle cx="360" cy="120" r="3"/><circle cx="60" cy="320" r="3"/><circle cx="580" cy="570" r="4"/></g>
<path d="M90 420l170-96 310 150-90 96z" fill="url(#g12a)"/>
<path d="M330 520l140-64 100 46-100 66z" fill="#15328a"/>
<path d="M330 520l60 32 110-52" stroke="#bfe0ff" stroke-width="12" opacity=".9" fill="none"/>
<path d="M88 270l170-82v150l-170 82z" fill="#15307e"/>
<g stroke="#2a4fb0" stroke-width="10"><path d="M120 258v140M150 244v140M180 230v140M210 216v140M240 202v140"/></g>
<path d="M180 250l120-58 100 46v150l-100-46-120 58z" fill="#10285e"/>
<path d="M200 262l100-48v36l-100 48zM200 330l100-48v36l-100 48z" fill="#1b3f7a"/>
<path d="M300 214l100 46v36l-100-46z" fill="#2d4f86"/><path d="M210 245l90-42" stroke="#3fa0b0" stroke-width="8"/>
<circle cx="310" cy="232" r="8" fill="#e0a83a"/><circle cx="262" cy="318" r="8" fill="#e0903a"/><circle cx="262" cy="388" r="8" fill="#d88a3a"/><path d="M330 330l40-20" stroke="#3fb8a0" stroke-width="10"/>
<path d="M340 380l66-32 88 40v120l-88-40-66 32z" fill="#102a80"/>
<path d="M406 348l88 40v120l-88-40z" fill="#1f4ad0"/>
<rect x="404" y="392" width="26" height="80" fill="#e0903a" opacity=".9"/><rect x="446" y="380" width="20" height="100" fill="#d8e8ff"/><rect x="478" y="368" width="18" height="60" fill="#e0503a"/>
<path d="M400 330l60-20" stroke="#7fb0ff" stroke-width="8"/></svg></div><div class="tt">告警解读智能体</div><svg class="sh" viewBox="0 0 15 15" fill="none" stroke="#3a3a3a" stroke-width="1.25" stroke-linejoin="round" stroke-linecap="round"><path d="M1.2 9.6v4.2h12.4V9.6"/><path d="M3 8.6c.6-3.2 2.6-5 6.2-5.1V1l4.2 3.9-4.2 3.7V6.1C6.6 6 4.6 6.7 3 8.6z"/></svg><svg class="dt" viewBox="0 0 12 3"><circle cx="1.5" cy="1.5" r="1.15" fill="#3a3a3a"/><circle cx="5.9" cy="1.5" r="1.15" fill="#3a3a3a"/><circle cx="10.3" cy="1.5" r="1.15" fill="#3a3a3a"/></svg><svg class="cm" viewBox="0 0 12 11" fill="none" stroke="#868686" stroke-width="1.1" stroke-linejoin="round"><path d="M1 1h10v7.3H4.4L2.7 9.8V8.3H1z"/><g fill="#868686" stroke="none"><circle cx="3.5" cy="4.7" r=".7"/><circle cx="6" cy="4.7" r=".7"/><circle cx="8.5" cy="4.7" r=".7"/></g></svg><span class="cn">0</span><div class="ds">告警解读智能体是一款专为网络安全设计的智能分析工<br>具。它利用先进的AI技术，对设备端产生的告警信息...</div><div class="hr"></div><div class="av">系</div><div class="nm">系统管理员</div><div class="us">立即使用</div></div>
  </div>
</div>
<svg id="mascot" viewBox="0 0 526 789">
<defs>
<linearGradient id="mh" x1="0" y1="0" x2="1" y2="1"><stop offset="0" stop-color="#5b86ea"/><stop offset=".55" stop-color="#3f66d6"/><stop offset="1" stop-color="#3355c4"/></linearGradient>
<linearGradient id="mb" x1="0" y1="0" x2="0" y2="1"><stop offset="0" stop-color="#5a8cec"/><stop offset="1" stop-color="#4474dc"/></linearGradient>
</defs>
<!-- legs / feet -->
<path d="M232 630h62l-2 70h-66z" fill="#c3e2f6"/><path d="M318 630h62l8 70h-66z" fill="#bfdff5"/>
<path d="M222 660q36 8 72 0M320 660q36 8 70 0" stroke="#d8b65e" stroke-width="5" fill="none"/>
<path d="M205 712q0-32 44-32 42 0 44 30 1 30-44 30-44 0-44-28z" fill="#3a5ecf"/>
<path d="M322 712q0-32 44-32 42 0 44 30 1 30-44 30-44 0-44-28z" fill="#3558c8"/>
<path d="M215 700q34-20 70-4M332 700q34-20 70-4" stroke="#5f88e6" stroke-width="9" fill="none"/>
<!-- right arm (viewer right) -->
<path d="M380 470q46 20 76 92l-38 22q-24-48-52-66z" fill="#c1e1f6"/>
<path d="M426 566q20-24 46-12 28 14 22 34-4 14-20 10 0 16-18 16-26 0-34-24z" fill="#4a7ee2"/>
<!-- torso -->
<path d="M222 452q84-26 166 0l14 108q4 50-8 92-90 16-180 0-10-44-6-92z" fill="#c3e2f6"/>
<path d="M262 440h86q14 30 12 100 0 70-20 116h-70q-22-46-22-116-2-70 14-100z" fill="url(#mb)"/>
<path d="M226 545q80 14 166 0" stroke="#d8b65e" stroke-width="5" fill="none"/>
<circle cx="305" cy="548" r="33" fill="#4f80e4" stroke="#f2f6fd" stroke-width="6"/>
<path d="M288 536h34v16q0 14-17 20-17-6-17-20z" fill="#e8f0fc"/>
<!-- left raised arm -->
<path d="M232 462q-30 4-58 24l20 40q26-22 50-22z" fill="#4c80e2"/>
<path d="M100 455q-12-10-4-18 10-6 22 6l6-26q4-12 14-8 8 4 6 16l14-12q10-6 16 2 4 8-4 16l14-2q12 0 12 10-2 8-12 12 16 10 8 30-10 24-40 26-34 0-50-22-8-14-2-30z" fill="#4c82e4"/>
<circle cx="160" cy="486" r="8" fill="#e2c25e"/>
<path d="M96 492l40-6" stroke="#f0f4ff" stroke-width="4"/>
<!-- helmet back spikes -->
<path d="M182 150q-46 60-36 150l60-40q-30-50-24-110z" fill="#3c63d2"/>
<path d="M440 140q50 64 30 160l-58-40q34-60 28-120z" fill="#3a60cf"/>
<path d="M106 296q10 80 90 134l20-120q-60 14-110-14z" fill="#3b62d2"/>
<path d="M500 300q-8 84-82 130l-28-120q60 20 110-10z" fill="#375cca"/>
<!-- face -->
<ellipse cx="305" cy="374" rx="120" ry="86" fill="#f8e8d0"/>
<path d="M206 300q40-30 96-22 60-8 104 22-8 16-30 18-40-22-74-8-40-16-78 6-14-2-18-16z" fill="#efd28a"/>
<!-- helmet main -->
<path d="M305 66C286 100 214 168 184 236 158 292 158 342 176 392 186 420 198 440 202 450 202 420 200 380 194 334 224 292 266 278 305 278 344 278 386 292 416 334 410 380 408 420 408 450 412 440 424 420 434 392 452 342 452 292 426 236 396 168 324 100 305 66Z" fill="url(#mh)"/>
<path d="M305 82q-36 40-84 110 44-36 84-40z" fill="#7aa2f2" opacity=".6"/>
<circle cx="305" cy="228" r="29" fill="#d9b65c"/><path d="M290 232q4-18 24-16 12 2 10 14-4 10-16 8" stroke="#fff4cf" stroke-width="7" fill="none"/>
<path d="M196 300q50-34 109-28 59-6 109 28" stroke="#e2c064" stroke-width="7" fill="none"/>
<!-- visor -->
<path d="M196 306q109-20 218 0 12 38 0 78-44 18-80 2-29-12-58 0-36 16-80-2-12-40 0-78z" fill="#d9eafc" opacity=".75"/>
<path d="M196 306q109-20 218 0" stroke="#a6cdf4" stroke-width="5" fill="none"/>
<ellipse cx="256" cy="356" rx="20" ry="26" fill="#2f58cc"/><ellipse cx="362" cy="356" rx="20" ry="26" fill="#2f58cc"/>
<circle cx="262" cy="348" r="7" fill="#dfeaff"/><circle cx="368" cy="348" r="7" fill="#dfeaff"/>
<path d="M236 318q20-14 44-4M338 314q24-10 44 4" stroke="#c9a24a" stroke-width="7" fill="none"/>
<path d="M286 412q20 10 40 0" stroke="#8a6a4a" stroke-width="5" fill="none"/>
</svg>
<div id="edge"><i class="r"></i><i class="k"></i></div>
</body>
</html>
